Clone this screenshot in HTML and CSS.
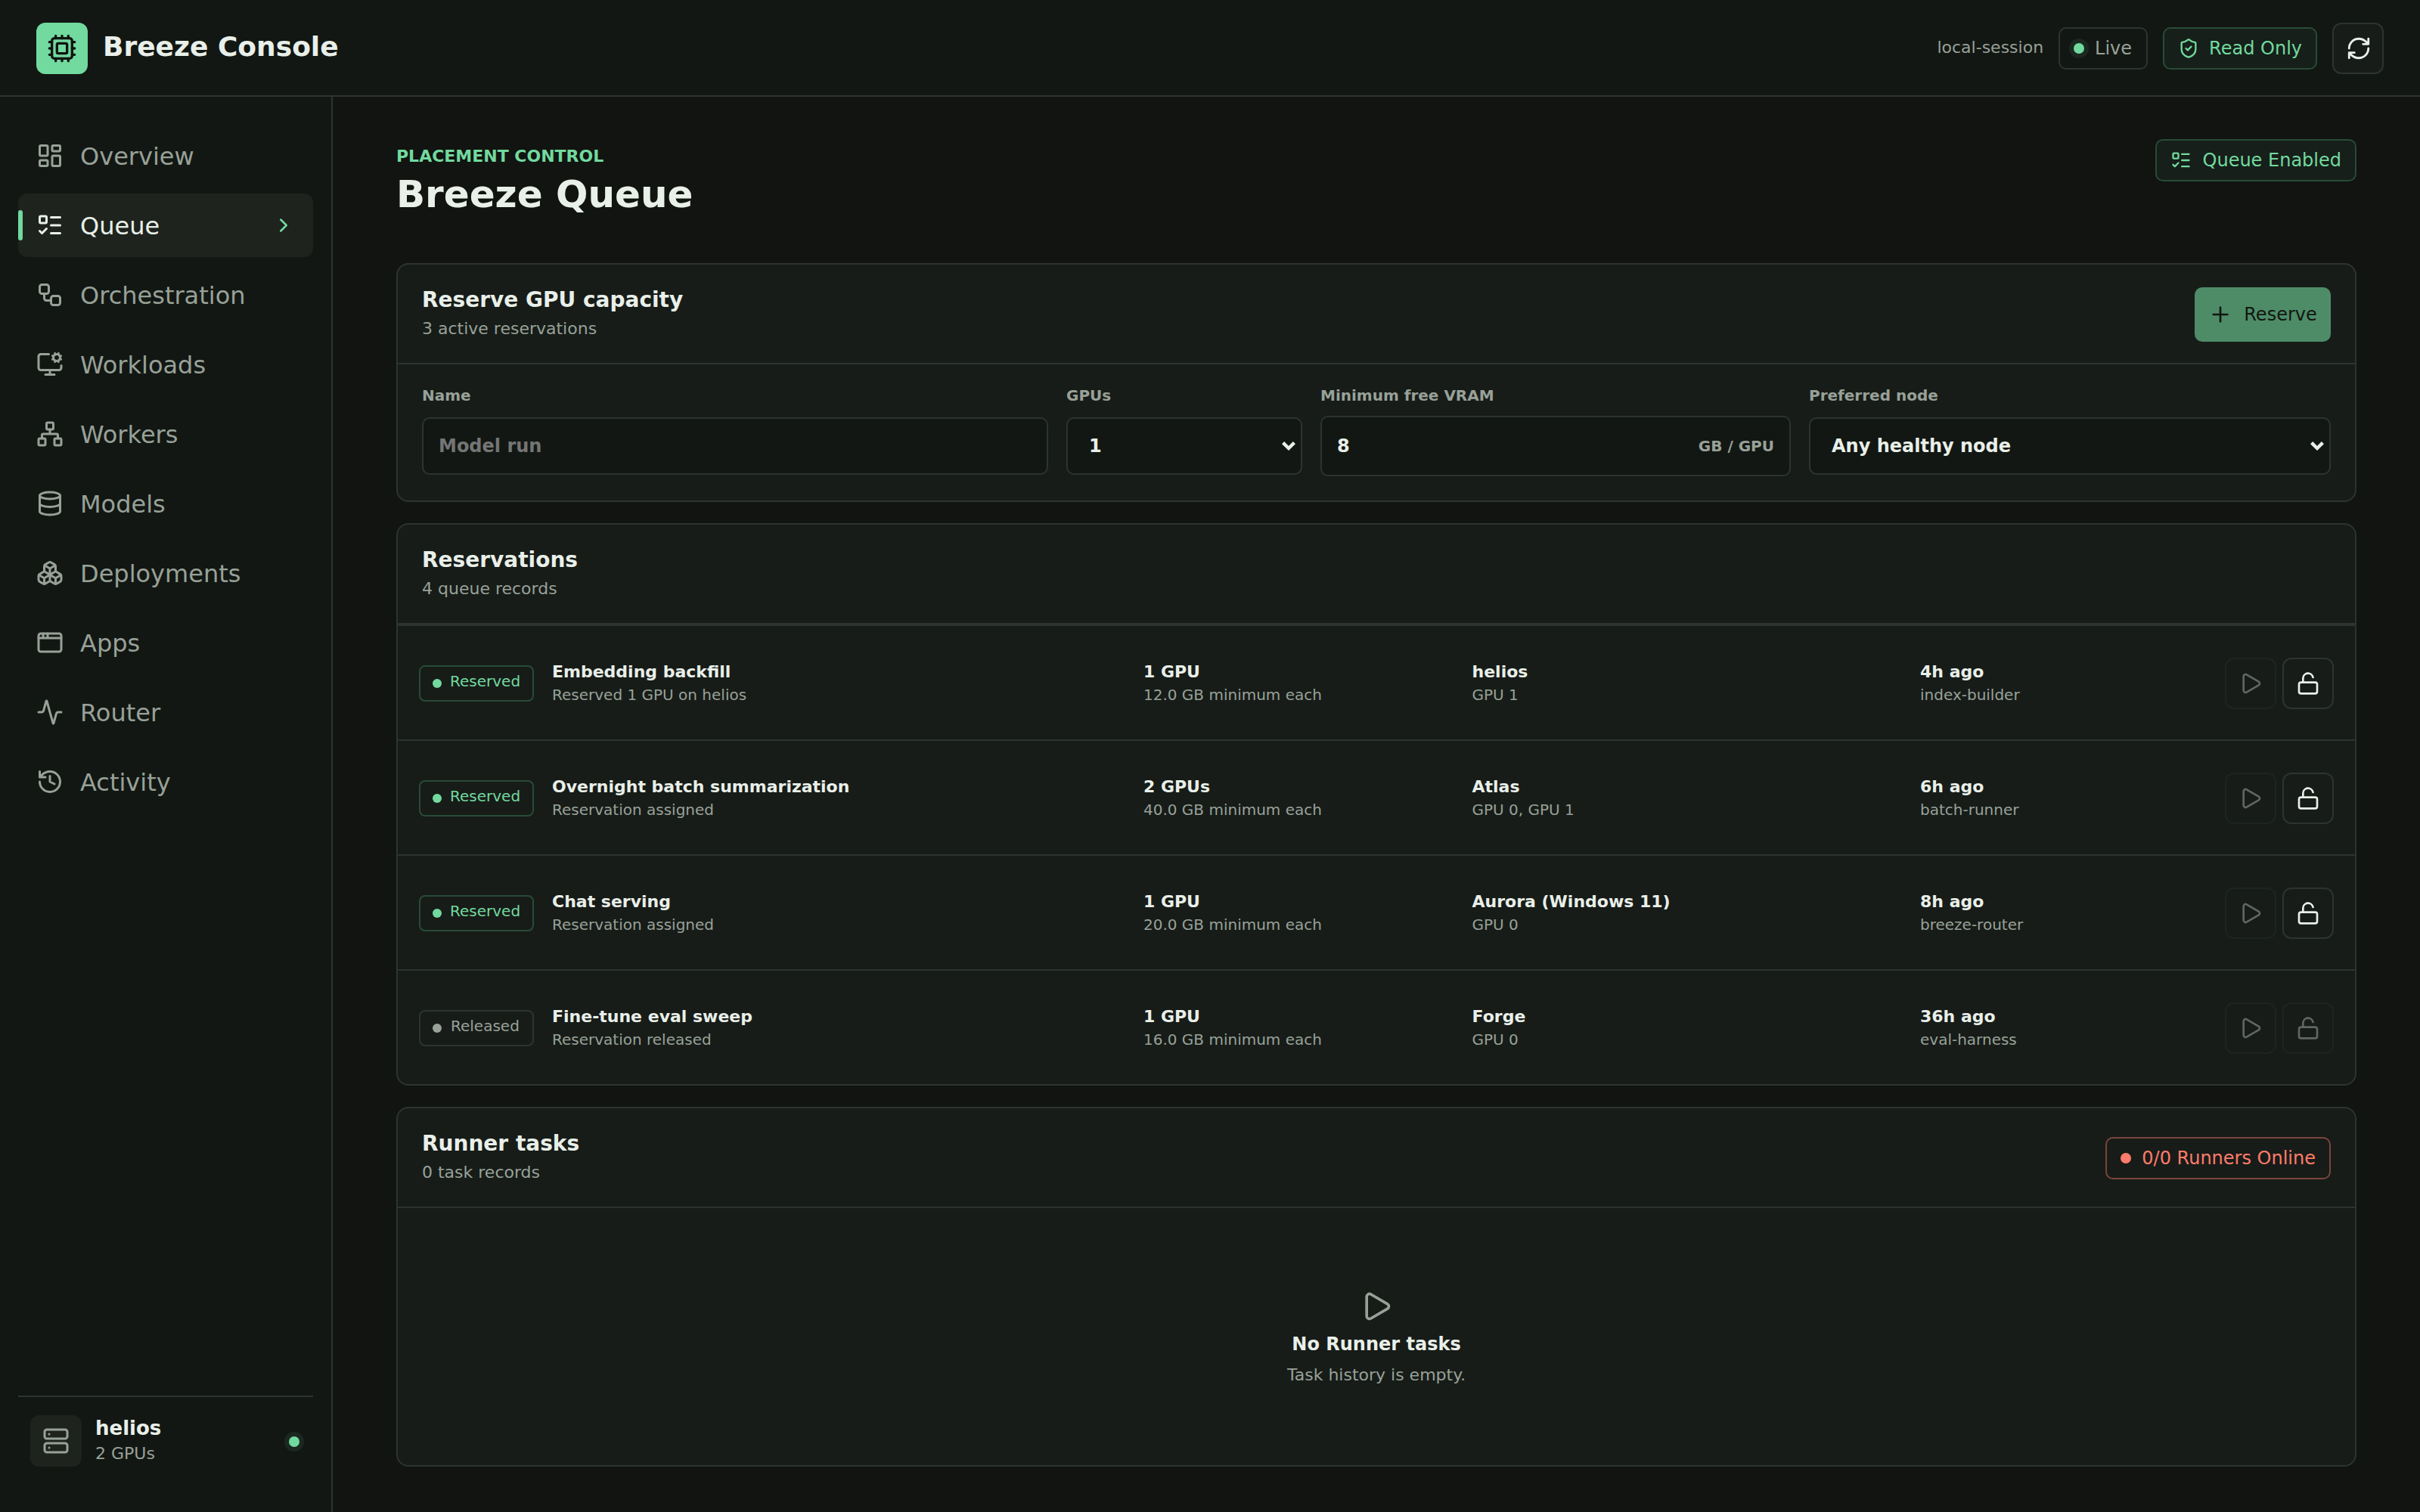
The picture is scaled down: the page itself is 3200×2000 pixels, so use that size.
FILE: index.html
```html
<!DOCTYPE html>
<html lang="en">
<head>
<meta charset="utf-8">
<title>Breeze Console</title>
<link rel="stylesheet" href="styles.css">
</head>
<body>
<svg class="sprite" aria-hidden="true">
  <symbol id="cpu" viewBox="0 0 24 24"><path d="M12 20v2M12 2v2M17 20v2M17 2v2M2 12h2M2 17h2M2 7h2M20 12h2M20 17h2M20 7h2M7 20v2M7 2v2"/><rect x="4" y="4" width="16" height="16" rx="2"/><rect x="8" y="8" width="8" height="8" rx="1"/></symbol>
  <symbol id="dashboard" viewBox="0 0 24 24"><rect x="3" y="3" width="7" height="9" rx="1"/><rect x="14" y="3" width="7" height="5" rx="1"/><rect x="14" y="12" width="7" height="9" rx="1"/><rect x="3" y="16" width="7" height="5" rx="1"/></symbol>
  <symbol id="todo" viewBox="0 0 24 24"><path d="M13 5h8M13 12h8M13 19h8M3 17l2 2 4-4"/><rect x="3" y="4" width="6" height="6" rx="1"/></symbol>
  <symbol id="workflow" viewBox="0 0 24 24"><rect x="3" y="3" width="8" height="8" rx="2"/><path d="M7 11v4a2 2 0 0 0 2 2h4"/><rect x="13" y="13" width="8" height="8" rx="2"/></symbol>
  <symbol id="monitor" viewBox="0 0 24 24"><path d="M12 17v4M14.305 7.53l.923-.382M15.228 4.852l-.923-.383M16.852 3.228l-.383-.924M16.852 8.772l-.383.923M19.148 3.228l.383-.924M19.53 9.696l-.382-.924M20.772 4.852l.924-.383M20.772 7.148l.924.383M22 13v2a2 2 0 0 1-2 2H4a2 2 0 0 1-2-2V5a2 2 0 0 1 2-2h7M8 21h8"/><circle cx="18" cy="6" r="3"/></symbol>
  <symbol id="network" viewBox="0 0 24 24"><rect x="16" y="16" width="6" height="6" rx="1"/><rect x="2" y="16" width="6" height="6" rx="1"/><rect x="9" y="2" width="6" height="6" rx="1"/><path d="M5 16v-3a1 1 0 0 1 1-1h12a1 1 0 0 1 1 1v3M12 12V8"/></symbol>
  <symbol id="database" viewBox="0 0 24 24"><ellipse cx="12" cy="5" rx="9" ry="3"/><path d="M3 5v14a9 3 0 0 0 18 0V5M3 12a9 3 0 0 0 18 0"/></symbol>
  <symbol id="boxes" viewBox="0 0 24 24"><path d="M2.97 12.92A2 2 0 0 0 2 14.63v3.24a2 2 0 0 0 .97 1.71l3 1.8a2 2 0 0 0 2.06 0L12 19v-5.5l-5-3-4.03 2.42ZM7 16.5l-4.74-2.85M7 16.5l5-3M7 16.5v5.17M12 13.5V19l3.97 2.38a2 2 0 0 0 2.06 0l3-1.8a2 2 0 0 0 .97-1.71v-3.24a2 2 0 0 0-.97-1.71L17 10.5l-5 3ZM17 16.5l-5-3M17 16.5l4.74-2.85M17 16.5v5.17M7.97 4.42A2 2 0 0 0 7 6.13v4.37l5 3 5-3V6.13a2 2 0 0 0-.97-1.71l-3-1.8a2 2 0 0 0-2.06 0l-3 1.8ZM12 8L7.26 5.15M12 8l4.74-2.85M12 13.5V8"/></symbol>
  <symbol id="window" viewBox="0 0 24 24"><rect x="2" y="4" width="20" height="16" rx="2"/><path d="M10 4v4M2 8h20M6 4v4"/></symbol>
  <symbol id="activity" viewBox="0 0 24 24"><path d="M22 12h-2.48a2 2 0 0 0-1.93 1.46l-2.35 8.36a.25.25 0 0 1-.48 0L9.24 2.18a.25.25 0 0 0-.48 0l-2.35 8.36A2 2 0 0 1 4.49 12H2"/></symbol>
  <symbol id="history" viewBox="0 0 24 24"><path d="M3 12a9 9 0 1 0 9-9 9.75 9.75 0 0 0-6.74 2.74L3 8M3 3v5h5M12 7v5l4 2"/></symbol>
  <symbol id="chevron" viewBox="0 0 24 24"><path d="m9 18 6-6-6-6"/></symbol>
  <symbol id="server" viewBox="0 0 24 24"><rect x="2" y="2" width="20" height="8" rx="2"/><rect x="2" y="14" width="20" height="8" rx="2"/><path d="M6 6h.01M6 18h.01"/></symbol>
  <symbol id="shield" viewBox="0 0 24 24"><path d="M20 13c0 5-3.5 7.5-7.66 8.95a1 1 0 0 1-.67-.01C7.5 20.5 4 18 4 13V6a1 1 0 0 1 1-1c2 0 4.5-1.2 6.24-2.72a1.17 1.17 0 0 1 1.52 0C14.51 3.81 17 5 19 5a1 1 0 0 1 1 1zM9 12l2 2 4-4"/></symbol>
  <symbol id="refresh" viewBox="0 0 24 24"><path d="M3 12a9 9 0 0 1 9-9 9.75 9.75 0 0 1 6.74 2.74L21 8M21 3v5h-5M21 12a9 9 0 0 1-9 9 9.75 9.75 0 0 1-6.74-2.74L3 16M8 16H3v5"/></symbol>
  <symbol id="plus" viewBox="0 0 24 24"><path d="M5 12h14M12 5v14"/></symbol>
  <symbol id="play" viewBox="0 0 24 24"><path d="M5 5a2 2 0 0 1 3.008-1.728l11.997 6.998a2 2 0 0 1 .003 3.458l-12 7A2 2 0 0 1 5 19z"/></symbol>
  <symbol id="unlock" viewBox="0 0 24 24"><rect x="3" y="11" width="18" height="11" rx="2"/><path d="M7 11V7a5 5 0 0 1 9.9-1"/></symbol>
  <symbol id="caret" viewBox="0 0 20 16"><path d="M2.6 3.6L10 11l7.4-7.4"/></symbol>
</svg>

<header class="topbar">
  <div class="brand">
    <span class="logo"><svg class="icon s40"><use href="#cpu"/></svg></span>
    <span class="brand-name">Breeze Console</span>
  </div>
  <div class="top-actions">
    <span class="session">local-session</span>
    <span class="pill live"><i class="dot halo"></i>Live</span>
    <span class="pill good access"><svg class="icon s28"><use href="#shield"/></svg>Read Only</span>
    <button class="icon-btn raised"><svg class="icon s34"><use href="#refresh"/></svg></button>
  </div>
</header>

<div class="shell">
  <aside class="sidebar">
    <nav class="nav">
      <a class="nav-item"><svg class="icon s36"><use href="#dashboard"/></svg><span>Overview</span></a>
      <a class="nav-item active"><svg class="icon s36"><use href="#todo"/></svg><span>Queue</span><svg class="icon s30 chevron"><use href="#chevron"/></svg></a>
      <a class="nav-item"><svg class="icon s36"><use href="#workflow"/></svg><span>Orchestration</span></a>
      <a class="nav-item"><svg class="icon s36"><use href="#monitor"/></svg><span>Workloads</span></a>
      <a class="nav-item"><svg class="icon s36"><use href="#network"/></svg><span>Workers</span></a>
      <a class="nav-item"><svg class="icon s36"><use href="#database"/></svg><span>Models</span></a>
      <a class="nav-item"><svg class="icon s36"><use href="#boxes"/></svg><span>Deployments</span></a>
      <a class="nav-item"><svg class="icon s36"><use href="#window"/></svg><span>Apps</span></a>
      <a class="nav-item"><svg class="icon s36"><use href="#activity"/></svg><span>Router</span></a>
      <a class="nav-item"><svg class="icon s36"><use href="#history"/></svg><span>Activity</span></a>
    </nav>
    <div class="host">
      <span class="host-icon"><svg class="icon s36"><use href="#server"/></svg></span>
      <div class="host-text"><strong>helios</strong><span>2 GPUs</span></div>
      <i class="dot halo"></i>
    </div>
  </aside>

  <main class="main">
    <div class="page-head">
      <div>
        <p class="eyebrow">PLACEMENT CONTROL</p>
        <h1>Breeze Queue</h1>
      </div>
      <span class="pill good"><svg class="icon s28"><use href="#todo"/></svg>Queue Enabled</span>
    </div>

    <section class="panel">
      <div class="panel-head">
        <div class="heading"><h2>Reserve GPU capacity</h2><p>3 active reservations</p></div>
        <button class="primary"><svg class="icon s32"><use href="#plus"/></svg>Reserve</button>
      </div>
      <div class="form">
        <div class="field"><span class="label">Name</span><div class="slot"><div class="control placeholder">Model run</div></div></div>
        <div class="field"><span class="label">GPUs</span><div class="slot"><div class="control select">1<svg class="caret"><use href="#caret"/></svg></div></div></div>
        <div class="field"><span class="label">Minimum free VRAM</span><div class="slot"><div class="control tall">8<span class="unit">GB / GPU</span></div></div></div>
        <div class="field"><span class="label">Preferred node</span><div class="slot"><div class="control select">Any healthy node<svg class="caret"><use href="#caret"/></svg></div></div></div>
      </div>
    </section>

    <section class="panel">
      <div class="panel-head">
        <div class="heading"><h2>Reservations</h2><p>4 queue records</p></div>
      </div>
      <div class="row">
        <span class="status good"><i class="dot"></i><span>Reserved</span></span>
        <div class="cell"><strong>Embedding backfill</strong><span>Reserved 1 GPU on helios</span></div>
        <div class="cell"><strong>1 GPU</strong><span>12.0 GB minimum each</span></div>
        <div class="cell"><strong>helios</strong><span>GPU 1</span></div>
        <div class="cell"><strong>4h ago</strong><span>index-builder</span></div>
        <div class="actions"><button class="icon-btn off"><svg class="icon s32"><use href="#play"/></svg></button><button class="icon-btn"><svg class="icon s32"><use href="#unlock"/></svg></button></div>
      </div>
      <div class="row">
        <span class="status good"><i class="dot"></i><span>Reserved</span></span>
        <div class="cell"><strong>Overnight batch summarization</strong><span>Reservation assigned</span></div>
        <div class="cell"><strong>2 GPUs</strong><span>40.0 GB minimum each</span></div>
        <div class="cell"><strong>Atlas</strong><span>GPU 0, GPU 1</span></div>
        <div class="cell"><strong>6h ago</strong><span>batch-runner</span></div>
        <div class="actions"><button class="icon-btn off"><svg class="icon s32"><use href="#play"/></svg></button><button class="icon-btn"><svg class="icon s32"><use href="#unlock"/></svg></button></div>
      </div>
      <div class="row">
        <span class="status good"><i class="dot"></i><span>Reserved</span></span>
        <div class="cell"><strong>Chat serving</strong><span>Reservation assigned</span></div>
        <div class="cell"><strong>1 GPU</strong><span>20.0 GB minimum each</span></div>
        <div class="cell"><strong>Aurora (Windows 11)</strong><span>GPU 0</span></div>
        <div class="cell"><strong>8h ago</strong><span>breeze-router</span></div>
        <div class="actions"><button class="icon-btn off"><svg class="icon s32"><use href="#play"/></svg></button><button class="icon-btn"><svg class="icon s32"><use href="#unlock"/></svg></button></div>
      </div>
      <div class="row">
        <span class="status"><i class="dot"></i><span>Released</span></span>
        <div class="cell"><strong>Fine-tune eval sweep</strong><span>Reservation released</span></div>
        <div class="cell"><strong>1 GPU</strong><span>16.0 GB minimum each</span></div>
        <div class="cell"><strong>Forge</strong><span>GPU 0</span></div>
        <div class="cell"><strong>36h ago</strong><span>eval-harness</span></div>
        <div class="actions"><button class="icon-btn off"><svg class="icon s32"><use href="#play"/></svg></button><button class="icon-btn off"><svg class="icon s32"><use href="#unlock"/></svg></button></div>
      </div>
    </section>

    <section class="panel fill">
      <div class="panel-head">
        <div class="heading"><h2>Runner tasks</h2><p>0 task records</p></div>
        <span class="pill bad"><i class="dot"></i>0/0 Runners Online</span>
      </div>
      <div class="empty">
        <svg class="icon s44"><use href="#play"/></svg>
        <strong>No Runner tasks</strong>
        <span>Task history is empty.</span>
      </div>
    </section>
  </main>
</div>
</body>
</html>
```

FILE: styles.css
```css
:root {
  --bg: #111410;
  --chrome: #121713;
  --panel: #171c18;
  --raised: #1e231e;
  --line: #2d342f;
  --text: #e9efe9;
  --muted: #98a198;
  --green: #72d99f;
  --red: #ff7b6b;
}

* { box-sizing: border-box; margin: 0; }

body {
  height: 2000px;
  display: flex;
  flex-direction: column;
  background: var(--bg);
  color: var(--text);
  font-family: "DejaVu Sans", sans-serif;
  font-size: 24px;
  overflow: hidden;
}

button { font: inherit; color: inherit; padding: 0; }

.sprite { display: none; }

.icon {
  flex: none;
  fill: none;
  stroke: currentColor;
  stroke-width: 2;
  stroke-linecap: round;
  stroke-linejoin: round;
}
.s28 { width: 28px; height: 28px; }
.s30 { width: 30px; height: 30px; }
.s32 { width: 32px; height: 32px; }
.s34 { width: 34px; height: 34px; }
.s36 { width: 36px; height: 36px; }
.s40 { width: 40px; height: 40px; }
.s44 { width: 44px; height: 44px; }

/* Top bar */
.topbar {
  height: 128px;
  flex: none;
  display: flex;
  align-items: center;
  justify-content: space-between;
  padding: 2px 48px 0;
  background: var(--chrome);
  border-bottom: 2px solid var(--line);
}
.brand { display: flex; align-items: center; gap: 20px; }
.logo {
  width: 68px;
  height: 68px;
  display: grid;
  place-items: center;
  border-radius: 12px;
  background: var(--green);
  color: #101510;
}
.brand-name { font-size: 36px; font-weight: 700; line-height: 42px; padding-bottom: 4px; }
.top-actions { display: flex; align-items: center; gap: 20px; }
.session { padding-bottom: 3px; font-size: 22px; color: var(--muted); }

.pill {
  height: 56px;
  flex: none;
  display: inline-flex;
  align-items: center;
  gap: 14px;
  padding: 0 18px;
  border: 2px solid var(--line);
  border-radius: 10px;
  color: var(--muted);
  white-space: nowrap;
}
.pill.live { padding-right: 19px; }
.pill.access { gap: 13px; }
.pill.good { color: var(--green); border-color: #284b38; background: #161f19; }
.pill.bad { color: var(--red); border-color: #7c443d; }

.dot {
  width: 14px;
  height: 14px;
  flex: none;
  border-radius: 50%;
  background: currentColor;
}
.dot.halo { background: var(--green); box-shadow: 0 0 0 6px #1b2820; }

.icon-btn {
  width: 68px;
  height: 68px;
  display: grid;
  place-items: center;
  border: 2px solid var(--line);
  border-radius: 12px;
  background: transparent;
}
.icon-btn.raised { padding-left: 2px; background: var(--panel); }
.icon-btn.off { opacity: .35; }

/* Sidebar */
.shell { flex: 1; min-height: 0; display: flex; }
.sidebar {
  width: 440px;
  flex: none;
  display: flex;
  flex-direction: column;
  justify-content: space-between;
  padding: 36px 24px;
  background: var(--chrome);
  border-right: 2px solid var(--line);
}
.nav { display: flex; flex-direction: column; gap: 8px; }
.nav-item {
  height: 84px;
  display: flex;
  align-items: center;
  gap: 22px;
  padding: 0 24px;
  border-radius: 12px;
  color: var(--muted);
  font-size: 32px;
}
.nav-item span { padding-top: 2px; }
.nav-item.active { position: relative; background: var(--raised); color: var(--text); }
.nav-item.active::before {
  content: "";
  position: absolute;
  left: 0;
  top: 22px;
  width: 6px;
  height: 40px;
  border-radius: 3px;
  background: var(--green);
}
.chevron { margin-left: auto; color: var(--green); }

.host {
  display: flex;
  align-items: center;
  gap: 18px;
  padding: 24px 18px 24px 16px;
  border-top: 2px solid var(--line);
}
.host .dot { margin-top: 2px; }
.host-icon {
  width: 68px;
  height: 68px;
  display: grid;
  place-items: center;
  border-radius: 12px;
  background: var(--raised);
  color: var(--muted);
}
.host-text { flex: 1; display: flex; flex-direction: column; }
.host-text strong { font-size: 26px; line-height: 31px; margin-bottom: 3px; }
.host-text span { font-size: 22px; line-height: 30px; color: var(--muted); }

/* Page */
.main {
  flex: 1;
  display: flex;
  flex-direction: column;
  gap: 28px;
  padding: 56px 84px 60px;
}
.page-head {
  height: 136px;
  display: flex;
  align-items: flex-start;
  justify-content: space-between;
}
.page-head .pill { gap: 15px; }
.eyebrow { padding-top: 9px; font-size: 22px; font-weight: 700; line-height: 28px; color: var(--green); }
h1 { font-size: 50px; line-height: 58px; padding-top: 7px; }

.panel {
  display: flex;
  flex-direction: column;
  border: 2px solid var(--line);
  border-radius: 16px;
  background: var(--panel);
}
.panel.fill { flex: 1; }
.panel-head {
  height: 132px;
  display: flex;
  align-items: center;
  justify-content: space-between;
  padding: 2px 32px 0;
  border-bottom: 2px solid var(--line);
}
.heading { padding-bottom: 3px; }
h2 { font-size: 28px; line-height: 36px; }
.heading p { font-size: 22px; line-height: 30px; padding-top: 5px; color: var(--muted); }

.primary {
  width: 180px;
  height: 72px;
  display: flex;
  align-items: center;
  justify-content: center;
  gap: 15px;
  border: 0;
  border-radius: 10px;
  background: #4e8c68;
  color: #111711;
}

.form {
  display: grid;
  grid-template-columns: 828fr 312fr 622fr 690fr;
  gap: 24px;
  padding: 28px 32px 32px;
}
.label { display: block; font-size: 20px; font-weight: 700; line-height: 26px; color: var(--muted); }
.slot { height: 80px; display: flex; align-items: center; margin-top: 14px; }
.control {
  width: 100%;
  height: 76px;
  display: flex;
  align-items: center;
  justify-content: space-between;
  padding: 0 20px;
  border: 2px solid var(--line);
  border-radius: 10px;
  background: var(--chrome);
  font-weight: 700;
}
.control.tall { height: 80px; }
.control.placeholder { color: #757575; }
.control.select { padding: 0 6px 0 28px; }
.unit { font-size: 20px; color: var(--muted); }
.caret {
  width: 20px;
  height: 16px;
  fill: none;
  stroke: currentColor;
  stroke-width: 4.4;
}

.row {
  height: 152px;
  display: grid;
  grid-template-columns: 152px 1.2fr .65fr .9fr .6fr 144px;
  gap: 24px;
  align-items: center;
  padding: 2px 28px 0;
  border-top: 2px solid var(--line);
}
.status {
  height: 48px;
  display: flex;
  align-items: center;
  gap: 12px;
  padding: 0 0 0 16px;
  border: 2px solid var(--line);
  border-radius: 8px;
  color: var(--muted);
  font-size: 20px;
}
.status.good { color: var(--green); border-color: #284b38; }
.status.good { gap: 11px; }
.status .dot { width: 12px; height: 12px; }
.status span { padding-bottom: 6px; }
.cell { display: flex; flex-direction: column; white-space: nowrap; }
.cell strong { font-size: 22px; line-height: 30px; margin-bottom: 1px; }
.cell span { font-size: 20px; line-height: 29px; color: var(--muted); }
.actions { display: flex; gap: 8px; }

.empty {
  flex: 1;
  display: flex;
  flex-direction: column;
  align-items: center;
  justify-content: center;
  padding-top: 4px;
  color: var(--muted);
}
.empty strong { margin-top: 12px; line-height: 32px; color: var(--text); }
.empty span { margin-top: 10px; font-size: 22px; line-height: 30px; }
```
